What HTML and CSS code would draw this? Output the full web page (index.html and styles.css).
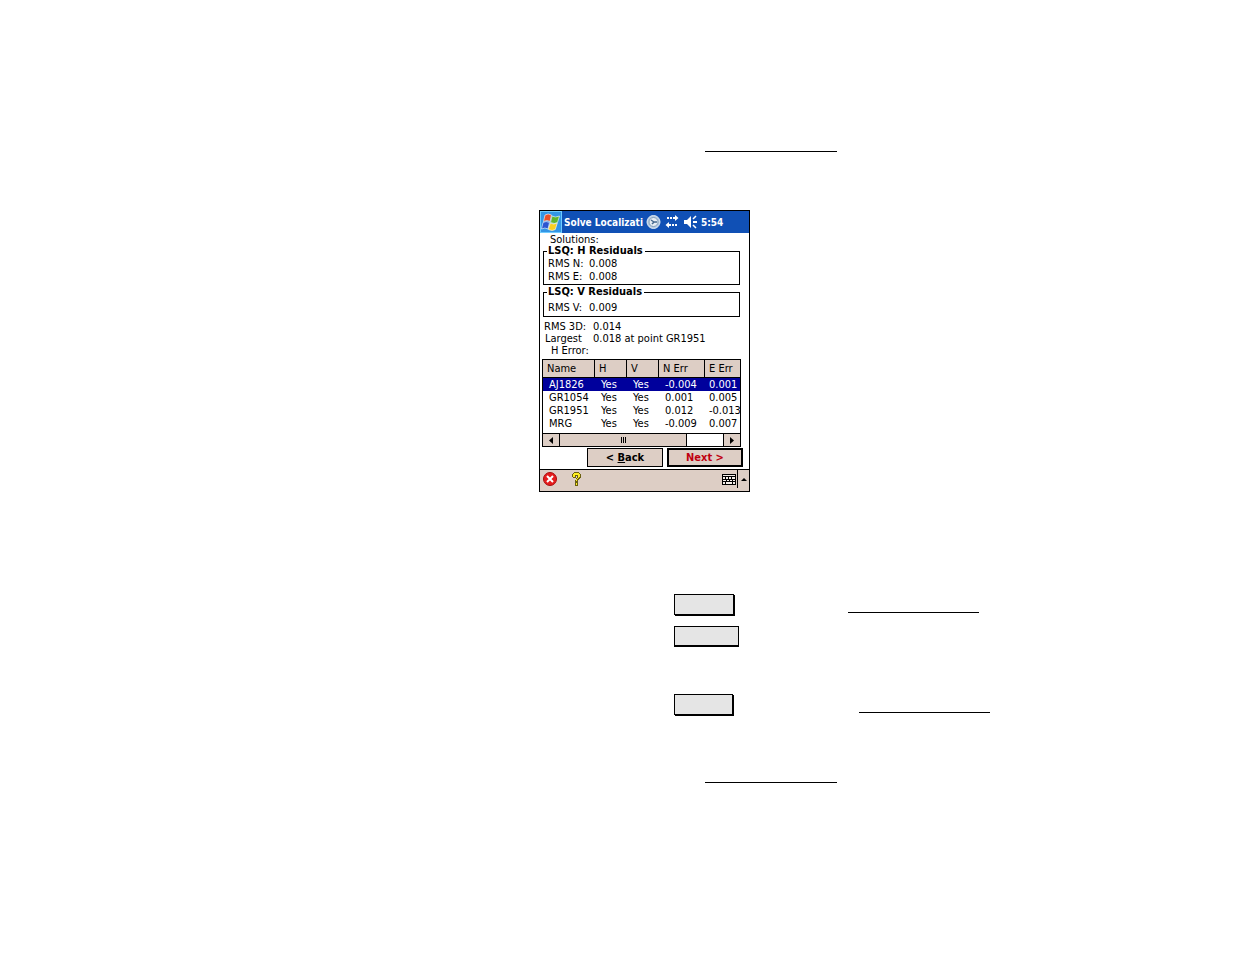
FILE: index.html
```html
<!DOCTYPE html>
<html lang="en">
<head>
<meta charset="utf-8">
<title>Solve Localization</title>
<link rel="stylesheet" href="styles.css">
</head>
<body>
<main class="page">
  <div class="rule rule-indent"></div>

  <section class="device">
    <header class="titlebar">
      <button class="start" aria-label="Start">
        <svg width="20" height="20" viewBox="0 0 20 20">
          <path d="M4 3q3-2 6.500 0l-1.500 6.500q-3-2-6.500 0z" fill="#e8502a" stroke="#fff" stroke-width=".6"/>
          <path d="M11 4q3 2 7.500 0l-2 6.500q-3 2-7 0z" fill="#5fb52c" stroke="#fff" stroke-width=".6"/>
          <path d="M2 10.500q3-2 6.500 0l-1.500 6.500q-3-2-6.500 0z" fill="#2c55d0" stroke="#fff" stroke-width=".6"/>
          <path d="M9.300 11q3 2 7 0l-2 6.500q-3 2-7 0z" fill="#f8cf22" stroke="#fff" stroke-width=".6"/>
        </svg>
      </button>
      <h1 class="title">Solve Localizati</h1>
      <svg class="tray" width="54" height="16" viewBox="0 0 54 16">
        <circle cx="7.500" cy="8" r="6.500" fill="#b8cbe0" stroke="#dce8f4"/>
        <circle cx="7.500" cy="8" r="4.500" fill="#e8eef5" stroke="#7f9cba"/>
        <path d="M5 6l3 2-2 2M8 8h3" fill="none" stroke="#46698f" stroke-width="1.500"/>
        <path d="M21 3h2v2h-2zM24 3h2v2h-2zM27 3h2V1l3.500 3L29 7V5h-2zM29 10h2v2h-2zM26 10h2v2h-2zM25 10h-2V8l-3.500 3L23 14v-2h2z" fill="#fff"/>
        <path d="M38 6h3l4-4v12l-4-4h-3zM47 7h4v2h-4z" fill="#fff"/>
        <path d="M47 5l3-3M47 11l3 3" stroke="#fff" stroke-width="1.500"/>
      </svg>
      <span class="clock">5:54</span>
    </header>

    <div class="content">
      <p class="solutions">Solutions:</p>
      <fieldset class="group">
        <legend>LSQ: H Residuals</legend>
        <dl class="pairs"><dt>RMS N:</dt><dd>0.008</dd><dt>RMS E:</dt><dd>0.008</dd></dl>
      </fieldset>
      <fieldset class="group group-v">
        <legend>LSQ: V Residuals</legend>
        <dl class="pairs"><dt>RMS V:</dt><dd>0.009</dd></dl>
      </fieldset>
      <dl class="summary">
        <dt>RMS 3D:</dt><dd>0.014</dd>
        <dt class="largest">Largest<br><span class="second">H Error:</span></dt><dd>0.018 at point GR1951</dd>
      </dl>

      <div class="grid">
        <table class="points">
          <colgroup><col class="c-name"><col class="c-flag"><col class="c-flag"><col class="c-north"><col></colgroup>
          <thead><tr><th>Name</th><th>H</th><th>V</th><th>N Err</th><th>E Err</th></tr></thead>
          <tbody>
            <tr class="selected"><td>AJ1826</td><td>Yes</td><td>Yes</td><td>-0.004</td><td>0.001</td></tr>
            <tr><td>GR1054</td><td>Yes</td><td>Yes</td><td>0.001</td><td>0.005</td></tr>
            <tr><td>GR1951</td><td>Yes</td><td>Yes</td><td>0.012</td><td>-0.013</td></tr>
            <tr><td>MRG</td><td>Yes</td><td>Yes</td><td>-0.009</td><td>0.007</td></tr>
          </tbody>
        </table>
        <div class="scrollbar">
          <button class="arrow" aria-label="Scroll left"><svg width="4" height="7" viewBox="0 0 4 7"><path d="M4 0v7L0 3.500z"/></svg></button>
          <div class="thumb"><svg width="5" height="6" viewBox="0 0 5 6"><path d="M0 0h1v6H0zM2 0h1v6H2zM4 0h1v6H4z"/></svg></div>
          <div class="track"></div>
          <button class="arrow" aria-label="Scroll right"><svg width="4" height="7" viewBox="0 0 4 7"><path d="M0 0v7l4-3.500z"/></svg></button>
        </div>
      </div>

      <div class="actions">
        <button class="action">&lt; <u>B</u>ack</button>
        <button class="action next">Next &gt;</button>
      </div>
    </div>

    <footer class="menubar">
      <button class="tool" aria-label="Close">
        <svg width="14" height="14" viewBox="0 0 14 14"><circle cx="7" cy="7" r="6.500" fill="#e51c1c" stroke="#a90d0d"/><path d="M4 4l6 6M10 4l-6 6" stroke="#fff" stroke-width="2"/></svg>
      </button>
      <button class="tool help" aria-label="Help">
        <svg width="9" height="14" viewBox="0 0 9 14" shape-rendering="crispEdges"><path d="M2 0h5v1h1v1h1v4H8v1H7v1H6v6H3V8h1V6h1V4H4v2H1V5H0V2h1V1h1z" fill="#6b6010"/><path d="M2 1h5v1h1v3H7v1H6v1H5v2H4V7h1V6h1V3H3v2H1V2h1zM4 11h1v2H4z" fill="#ffee22"/></svg>
      </button>
      <button class="tool keyboard" aria-label="Keyboard">
        <svg width="14" height="11" viewBox="0 0 14 11" shape-rendering="crispEdges"><path d="M0 0h14v11H0z"/><path d="M1 1h12v1H1zM1 3h2v2H1zM4 3h2v2H4zM7 3h2v2H7zM10 3h3v2h-3zM1 6h3v1H1zM5 6h2v1H5zM8 6h2v1H8zM11 6h2v1h-2zM1 8h2v2H1zM4 8h6v2H4zM11 8h2v2h-2z" fill="#f4eeea"/></svg>
      </button>
      <button class="tool more" aria-label="Input options"><svg width="6" height="3" viewBox="0 0 6 3"><path d="M3 0l3 3H0z"/></svg></button>
    </footer>
  </section>

  <div class="steps">
    <div class="step"><span class="key"></span><span class="rule"></span></div>
    <div class="step step-wide"><span class="key key-wide"></span></div>
    <div class="step step-last"><span class="key key-short"></span><span class="rule"></span></div>
  </div>
  <div class="rule rule-indent rule-end"></div>
</main>
</body>
</html>
```
FILE: styles.css
```css
* { box-sizing: border-box; }
body {
  margin: 0;
  background: #fff;
  color: #000;
  font: 11px/13px "DejaVu Sans Condensed", "DejaVu Sans", sans-serif;
}
button {
  margin: 0;
  padding: 0;
  border: 0;
  background: none;
  color: inherit;
  font: inherit;
}
svg { display: block; }
p, dl, dd, h1 { margin: 0; }

.page {
  max-width: 747px;
  margin: 0 auto;
  padding: 151px 0 64px 295px;
}
.rule { display: block; width: 131px; height: 1px; background: #000; }
.rule-indent { width: 132px; margin-left: 166px; }
.rule-end { margin-top: 67px; }

.device {
  display: flex;
  flex-direction: column;
  width: 211px;
  margin-top: 58px;
  border: 1px solid #000;
}
.titlebar {
  display: flex;
  align-items: center;
  height: 22px;
  background: #1050b5;
  color: #fff;
}
.start {
  display: grid;
  place-items: center;
  width: 22px;
  height: 22px;
  border: 1px solid #6ecbff;
  background: #3295e5;
}
.title {
  width: 84px;
  padding-left: 2px;
  font-size: 10px;
  line-height: 13px;
  white-space: nowrap;
}
.clock { padding-left: 1px; font-weight: bold; font-size: 10px; }

.content { padding: 0 6px 2px 3px; }
.solutions { margin-bottom: -2px; padding-left: 7px; line-height: 14px; }
.group {
  min-width: 0;
  margin: 0 3px 1px 0;
  padding: 0 4px;
  border: 1px solid #000;
}
.group legend {
  margin-left: -1px;
  padding: 0 2px 0 1px;
  font-weight: bold;
  font-size: 11px;
  line-height: 12px;
}
.pairs {
  display: grid;
  grid-template-columns: 41px 1fr;
  padding: 0 0 1px;
}
.group-v { margin-bottom: 4px; }
.group-v .pairs { padding: 3px 0 2px; }
.summary {
  display: grid;
  grid-template-columns: 49px 1fr;
  padding-left: 1px;
  line-height: 12px;
  white-space: nowrap;
}
.largest { padding-left: 1px; }
.second { padding-left: 6px; }

.grid { margin: 2px 2px 1px -1px; border: 1px solid #000; overflow: hidden; }
.points { width: 100%; table-layout: fixed; border-collapse: separate; border-spacing: 0; }
.c-name { width: 52px; }
.c-flag { width: 32px; }
.c-north { width: 46px; }
.points th {
  height: 18px;
  padding: 0 0 0 4px;
  border-right: 1px solid #000;
  border-bottom: 1px solid #000;
  background: #ddcec5;
  font-weight: normal;
  text-align: left;
  white-space: nowrap;
}
.points th:last-child { border-right: 0; }
.points td { height: 13px; padding: 0 0 0 6px; white-space: nowrap; }
.points td:last-child { padding-left: 4px; }
.selected { background: #00009c; color: #fff; }
.scrollbar {
  display: flex;
  height: 13px;
  margin-top: 3px;
  border-top: 1px solid #000;
}
.arrow, .thumb { display: grid; place-items: center; background: #ddcec5; }
.arrow { width: 16px; }
.thumb { flex: 7; border: solid #000; border-width: 0 1px; }
.track { flex: 2; border-right: 1px solid #000; }

.actions { display: flex; justify-content: flex-end; gap: 4px; }
.action {
  width: 76px;
  height: 19px;
  border: 1px solid #000;
  background: #ddcec5;
  font-weight: bold;
}
.next { border-width: 2px; color: #c00010; }

.menubar {
  display: flex;
  align-items: center;
  height: 22px;
  padding-bottom: 3px;
  border-top: 1px solid #000;
  background: #ddcec5;
}
.tool { display: grid; place-items: center; width: 20px; height: 18px; }
.help { margin-left: 6px; }
.keyboard { margin-left: auto; width: 16px; }
.more { width: 12px; border-left: 1px solid #000; }

.steps { padding: 102px 0 0 135px; }
.step { display: flex; align-items: flex-end; justify-content: space-between; width: 305px; }
.key {
  width: 60px;
  height: 21px;
  border: 1px solid #000;
  background: #e5e5e5;
  box-shadow: 1px 1px #000;
}
.step .rule { margin-bottom: 2px; }
.step-wide { margin-top: 11px; }
.key-wide { width: 65px; height: 20px; box-shadow: 0 1px #000; }
.step-last { width: 316px; margin-top: 48px; }
.key-short { width: 59px; }
```
